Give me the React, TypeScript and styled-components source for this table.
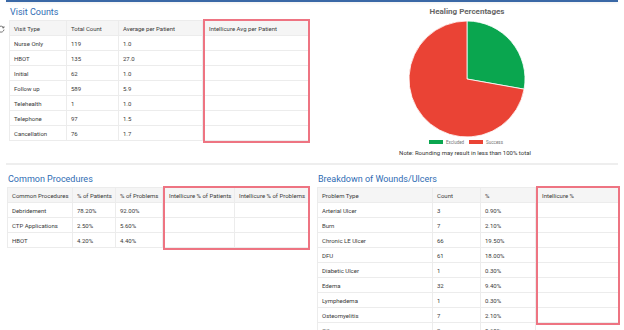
import React from 'react';
import styled, { createGlobalStyle } from 'styled-components';

const GlobalStyle = createGlobalStyle`
  body {
    margin: 0;
    background: #fff;
    font-family: Roboto, "Liberation Sans", Arial, sans-serif;
  }
`;

const Page = styled.div`
  width: 624px;
  height: 330px;
  overflow: hidden;
  position: relative;
`;

const TopBar = styled.div`
  height: 2px;
  margin: 0 6px;
  background: #3a68a6;
  box-shadow: 0 1px 3px rgba(0, 0, 0, 0.08);
`;

const Section = styled.div`
  display: flex;
`;

const Panel = styled.div<{ $w?: number; $pl: number; $pt: number }>`
  width: ${(p) => (p.$w ? `${p.$w}px` : 'auto')};
  flex: ${(p) => (p.$w ? 'none' : '1')};
  padding-left: ${(p) => p.$pl}px;
  padding-top: ${(p) => p.$pt}px;
  box-sizing: border-box;
`;

const Title = styled.div`
  font-size: 9px;
  line-height: 12px;
  height: 12px;
  color: #2f6cb3;
  margin-left: 1px;
  margin-bottom: 2px;
`;

const TableRow = styled.div`
  display: flex;
  align-items: flex-start;
`;

const IconSlot = styled.div`
  width: 0;
  margin-top: 5px;
  overflow: visible;
  svg {
    display: block;
    margin-left: -12px;
  }
`;

const Grid = styled.div<{ $cols: string }>`
  display: grid;
  grid-template-columns: ${(p) => p.$cols};
  grid-auto-rows: 15px;
  border-top: 1px solid #ececec;
  border-left: 1px solid #ececec;
`;

const Highlight = styled.div`
  border: 2px solid #ee7482;
  margin-top: -1px;
  background: #fff;
  ${Grid} {
    border: none;
  }
`;

const Cell = styled.div<{ $head?: boolean; $last?: boolean }>`
  display: flex;
  align-items: center;
  padding: 0 4px;
  font-size: 6px;
  color: #3a3a3a;
  white-space: nowrap;
  overflow: hidden;
  background: ${(p) => (p.$head ? '#f5f5f5' : '#fff')};
  border-bottom: 1px solid #ececec;
  border-right: ${(p) => (p.$last ? 'none' : '1px solid #ececec')};
`;

const Divider = styled.div`
  height: 2px;
  margin: 0 6px;
  background: #eeeeee;
`;

const ChartTitle = styled.div`
  text-align: center;
  font-size: 8px;
  font-weight: bold;
  color: #666;
  line-height: 12px;
  height: 12px;
`;

const PieBox = styled.div`
  display: flex;
  justify-content: center;
  margin-top: 2px;
  svg {
    display: block;
  }
`;

const Legend = styled.div`
  display: flex;
  justify-content: center;
  align-items: center;
  gap: 3px;
  margin-top: 1px;
  height: 6px;
`;

const Swatch = styled.span<{ $color: string }>`
  display: inline-block;
  width: 14px;
  height: 4px;
  background: ${(p) => p.$color};
`;

const LegendLabel = styled.span`
  font-size: 4.5px;
  color: #777;
  margin-right: 2px;
`;

const Note = styled.div`
  text-align: center;
  font-size: 6px;
  color: #333;
  margin-top: 3px;
  line-height: 9px;
  padding-right: 4px;
`;

type TableProps = {
  cols: number[];
  head: string[];
  rows: string[][];
  hlCols: number[];
  hlHead: string[];
  hlRows: number;
};

const DataTable = ({ cols, head, rows, hlCols, hlHead, hlRows }: TableProps) => (
  <>
    <Grid $cols={cols.map((c) => `${c}px`).join(' ')}>
      {head.map((h) => (
        <Cell key={h} $head>
          {h}
        </Cell>
      ))}
      {rows.map((r, i) => r.map((v, j) => <Cell key={`${i}-${j}`}>{v}</Cell>))}
    </Grid>
    <Highlight>
      <Grid $cols={hlCols.map((c) => `${c}px`).join(' ')}>
        {hlHead.map((h, j) => (
          <Cell key={h} $head $last={j === hlHead.length - 1}>
            {h}
          </Cell>
        ))}
        {Array.from({ length: hlRows }).map((_, i) =>
          hlHead.map((h, j) => <Cell key={`${i}-${h}`} $last={j === hlHead.length - 1} />)
        )}
      </Grid>
    </Highlight>
  </>
);

const visits = [
  ['Nurse Only', '119', '1.0'],
  ['HBOT', '135', '27.0'],
  ['Initial', '62', '1.0'],
  ['Follow up', '589', '5.9'],
  ['Telehealth', '1', '1.0'],
  ['Telephone', '97', '1.5'],
  ['Cancellation', '76', '1.7'],
];

const procedures = [
  ['Debridement', '78.20%', '92.00%'],
  ['CTP Applications', '2.50%', '5.60%'],
  ['HBOT', '4.20%', '4.40%'],
];

const wounds = [
  ['Arterial Ulcer', '3', '0.90%'],
  ['Burn', '7', '2.10%'],
  ['Chronic LE Ulcer', '66', '19.50%'],
  ['DFU', '61', '18.00%'],
  ['Diabetic Ulcer', '1', '0.30%'],
  ['Edema', '32', '9.40%'],
  ['Lymphedema', '1', '0.30%'],
  ['Osteomyelitis', '7', '2.10%'],
  ['Other', '2', '0.60%'],
];

const RefreshIcon = () => (
  <svg width="8" height="8" viewBox="0 0 8 8">
    <path d="M6.6 2.6 A3 3 0 1 0 7 4.6" fill="none" stroke="#555" strokeWidth="0.8" />
    <path d="M7 1.2 L6.8 3 L5.1 2.6" fill="none" stroke="#555" strokeWidth="0.8" />
  </svg>
);

const Pie = () => {
  const cx = 60;
  const cy = 59;
  const r = 58;
  const frac = 0.278;
  const a = frac * Math.PI * 2;
  const ex = cx + r * Math.sin(a);
  const ey = cy - r * Math.cos(a);
  return (
    <svg width="120" height="118" viewBox="0 0 120 118">
      <path
        d={`M${cx} ${cy} L${cx} ${cy - r} A${r} ${r} 0 0 1 ${ex} ${ey} Z`}
        fill="#0aa64f"
        stroke="#fff"
        strokeWidth="0.8"
      />
      <path
        d={`M${cx} ${cy} L${ex} ${ey} A${r} ${r} 0 1 1 ${cx} ${cy - r} Z`}
        fill="#ea4335"
        stroke="#fff"
        strokeWidth="0.8"
      />
    </svg>
  );
};

export default function App() {
  return (
    <Page>
      <GlobalStyle />
      <TopBar />
      <Section>
        <Panel $w={310} $pl={9} $pt={4}>
          <Title>Visit Counts</Title>
          <TableRow>
            <IconSlot>
              <RefreshIcon />
            </IconSlot>
            <DataTable
              cols={[57, 52, 84]}
              head={['Visit Type', 'Total Count', 'Average per Patient']}
              rows={visits}
              hlCols={[103]}
              hlHead={['Intellicure Avg per Patient']}
              hlRows={visits.length}
            />
          </TableRow>
        </Panel>
        <Panel $pl={0} $pt={4}>
          <ChartTitle>Healing Percentages</ChartTitle>
          <PieBox>
            <Pie />
          </PieBox>
          <Legend>
            <Swatch $color="#0aa64f" />
            <LegendLabel>Excluded</LegendLabel>
            <Swatch $color="#ea4335" />
            <LegendLabel>Success</LegendLabel>
          </Legend>
          <Note>Note: Rounding may result in less than 100% total</Note>
        </Panel>
      </Section>
      <Divider style={{ marginTop: 6 }} />
      <Section>
        <Panel $w={310} $pl={7} $pt={8}>
          <Title>Common Procedures</Title>
          <TableRow>
            <DataTable
              cols={[65, 43, 47]}
              head={['Common Procedures', '% of Patients', '% of Problems']}
              rows={procedures}
              hlCols={[70, 73]}
              hlHead={['Intellicure % of Patients', 'Intellicure % of Problems']}
              hlRows={procedures.length}
            />
          </TableRow>
        </Panel>
        <Panel $pl={7} $pt={8}>
          <Title>Breakdown of Wounds/Ulcers</Title>
          <TableRow>
            <DataTable
              cols={[115, 48, 55]}
              head={['Problem Type', 'Count', '%']}
              rows={wounds}
              hlCols={[80]}
              hlHead={['Intellicure %']}
              hlRows={8}
            />
          </TableRow>
        </Panel>
      </Section>
    </Page>
  );
}
